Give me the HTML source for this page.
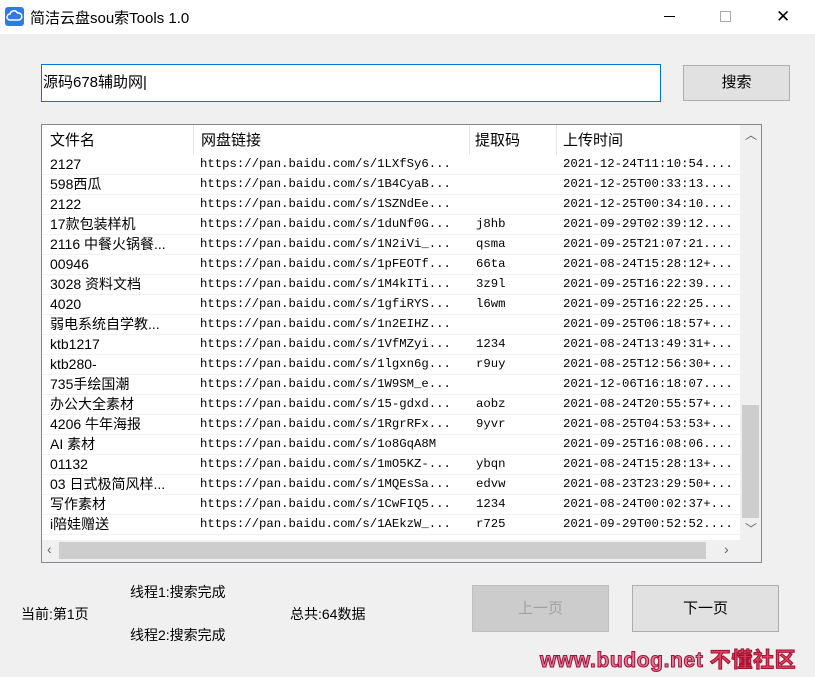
<!DOCTYPE html>
<html><head><meta charset="utf-8"><style>
*{margin:0;padding:0;box-sizing:border-box}
body{width:815px;height:677px;background:#f0f0f0;font-family:"Liberation Sans","Noto Sans CJK SC",sans-serif;position:relative;overflow:hidden;color:#000}
.title{position:absolute;left:0;top:0;width:815px;height:34px;background:#fff}
.abs{position:absolute}
.mono{font-family:"Liberation Mono","Noto Sans CJK SC",monospace;font-size:12.3px}
.row{position:absolute;left:42px;height:20px;width:698px;border-bottom:1px solid #f3f3f3;font-size:14px;line-height:19px;background:#fff}
.row span{position:absolute;top:0;white-space:nowrap}
.btn{position:absolute;border:1px solid #adadad;background:#e1e1e1;font-size:15px;text-align:center}
</style></head><body>
<div class="title">
<svg class="abs" style="left:5px;top:7px" width="19" height="19"><rect width="19" height="19" rx="3" fill="#2f7ae5"/><path d="M5 13 a3 3 0 0 1 0-6 a4 4 0 0 1 7.5-1 a3 3 0 0 1 1.5 7 z" fill="none" stroke="#fff" stroke-width="1.5"/></svg>
<div class="abs" style="left:30px;top:7px;font-size:15px">简洁云盘sou索Tools 1.0</div>
<div class="abs" style="left:664px;top:16px;width:11px;height:1px;background:#000"></div>
<div class="abs" style="left:720px;top:11px;width:11px;height:11px;border:1px solid #aaa"></div>
<div class="abs" style="left:776px;top:7px;font-size:17px;color:#000">✕</div>
</div>
<div class="abs" style="left:41px;top:64px;width:620px;height:38px;border:1px solid #0078d7;background:#fff;font-size:15px;line-height:36px;padding-left:1px">源码678辅助网|</div>
<div class="btn" style="left:683px;top:65px;width:107px;height:36px;line-height:34px">搜索</div>
<div class="abs" style="left:41px;top:124px;width:721px;height:439px;border:1px solid #828790;background:#fff"></div>
<div class="abs" style="left:42px;top:125px;width:698px;height:31px;background:#fff;font-size:15px;line-height:31px">
<span class="abs" style="left:8px">文件名</span><span class="abs" style="left:151px;top:0;width:1px;height:31px;background:#e5e5e5"></span>
<span class="abs" style="left:159px">网盘链接</span><span class="abs" style="left:427px;top:0;width:1px;height:31px;background:#e5e5e5"></span>
<span class="abs" style="left:433px">提取码</span><span class="abs" style="left:514px;top:0;width:1px;height:31px;background:#e5e5e5"></span>
<span class="abs" style="left:521px">上传时间</span></div>
<div id="rows"></div>
<div class="abs" style="left:740px;top:125px;width:21px;height:415px;background:#f0f0f0"></div>
<div class="abs" style="left:742px;top:405px;width:17px;height:113px;background:#cdcdcd"></div>
<div class="abs" style="left:745px;top:126px;font-size:12px;color:#606060">︿</div>
<div class="abs" style="left:745px;top:520px;font-size:12px;color:#606060">﹀</div>
<div class="abs" style="left:42px;top:540px;width:719px;height:22px;background:#f0f0f0"></div>
<div class="abs" style="left:59px;top:542px;width:647px;height:17px;background:#cdcdcd"></div>
<div class="abs" style="left:47px;top:541px;font-size:14px;color:#606060">‹</div>
<div class="abs" style="left:724px;top:541px;font-size:14px;color:#606060">›</div>
<div class="abs" style="left:130px;top:582px;font-size:14px">线程1:搜索完成</div>
<div class="abs" style="left:21px;top:604px;font-size:14px">当前:第1页</div>
<div class="abs" style="left:290px;top:604px;font-size:14px">总共:64数据</div>
<div class="abs" style="left:130px;top:625px;font-size:14px">线程2:搜索完成</div>
<div class="btn" style="left:472px;top:585px;width:137px;height:47px;line-height:45px;background:#cccccc;border-color:#bfbfbf;color:#a0a0a0">上一页</div>
<div class="btn" style="left:632px;top:585px;width:147px;height:47px;line-height:45px">下一页</div>
<div class="abs" style="left:540px;top:644px;font-size:21px;font-weight:bold;color:#e07aa0;-webkit-text-stroke:1px #a01030;white-space:nowrap;letter-spacing:0.6px">www.budog.net <span style="color:#e04060">不懂社区</span></div>
<script>
const d=[["2127","1LXfSy6...","","2021-12-24T11:10:54...."],["598西瓜","1B4CyaB...","","2021-12-25T00:33:13...."],["2122","1SZNdEe...","","2021-12-25T00:34:10...."],["17款包装样机","1duNf0G...","j8hb","2021-09-29T02:39:12...."],["2116 中餐火锅餐...","1N2iVi_...","qsma","2021-09-25T21:07:21...."],["00946","1pFEOTf...","66ta","2021-08-24T15:28:12+..."],["3028 资料文档","1M4kITi...","3z9l","2021-09-25T16:22:39...."],["4020","1gfiRYS...","l6wm","2021-09-25T16:22:25...."],["弱电系统自学教...","1n2EIHZ...","","2021-09-25T06:18:57+..."],["ktb1217","1VfMZyi...","1234","2021-08-24T13:49:31+..."],["ktb280-","1lgxn6g...","r9uy","2021-08-25T12:56:30+..."],["735手绘国潮","1W9SM_e...","","2021-12-06T16:18:07...."],["办公大全素材","15-gdxd...","aobz","2021-08-24T20:55:57+..."],["4206 牛年海报","1RgrRFx...","9yvr","2021-08-25T04:53:53+..."],["AI 素材","1o8GqA8M","","2021-09-25T16:08:06...."],["01132","1mO5KZ-...","ybqn","2021-08-24T15:28:13+..."],["03 日式极简风样...","1MQEsSa...","edvw","2021-08-23T23:29:50+..."],["写作素材","1CwFIQ5...","1234","2021-08-24T00:02:37+..."],["i陪娃赠送","1AEkzW_...","r725","2021-09-29T00:52:52...."]];
let h="";d.forEach((r,i)=>{h+=`<div class="row" style="top:${155+i*20}px"><span style="left:8px">${r[0]}</span><span class="mono" style="left:158px">https://pan.baidu.com/s/${r[1]}</span><span class="mono" style="left:434px">${r[2]}</span><span class="mono" style="left:521px">${r[3]}</span></div>`});
document.getElementById("rows").innerHTML=h;
</script>
</body></html>
